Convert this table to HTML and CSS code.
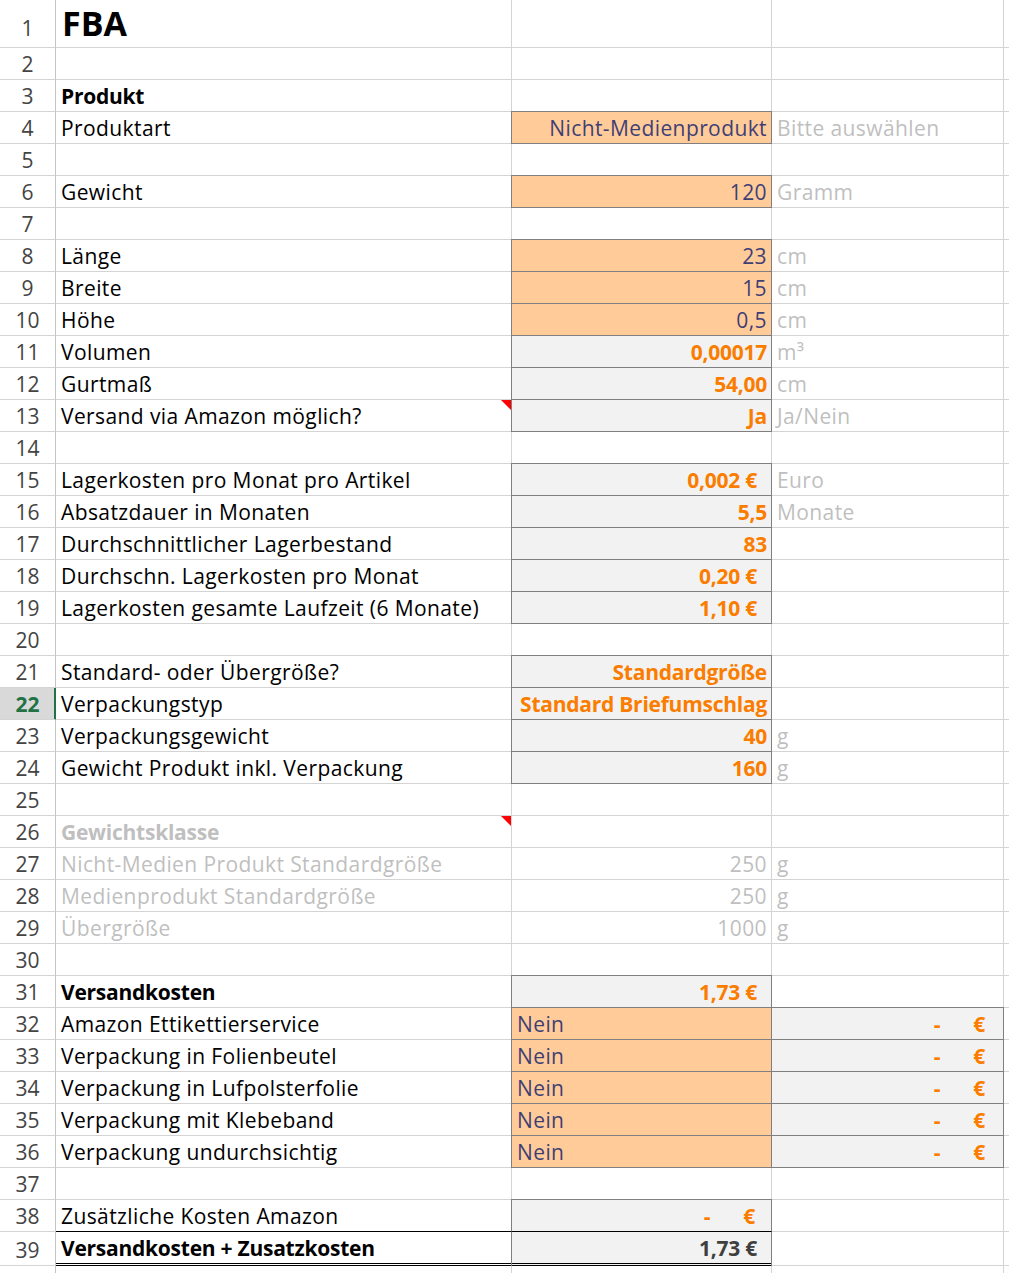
FILE: index.html
```html
<!DOCTYPE html>
<html lang="de">
<head>
<meta charset="utf-8">
<title>FBA</title>
<link rel="stylesheet" href="styles.css">
</head>
<body>
<div class="sheet">
  <div class="row r1"><div class="c h">1</div><div class="c title">FBA</div><div class="c"></div><div class="c"></div><div class="c"></div></div>
  <div class="row"><div class="c h">2</div><div class="c"></div><div class="c"></div><div class="c"></div><div class="c"></div></div>
  <div class="row"><div class="c h">3</div><div class="c b">Produkt</div><div class="c"></div><div class="c"></div><div class="c"></div></div>
  <div class="row"><div class="c h">4</div><div class="c">Produktart</div><div class="c box in r">Nicht-Medienprodukt</div><div class="c hint">Bitte auswählen</div><div class="c"></div></div>
  <div class="row"><div class="c h">5</div><div class="c"></div><div class="c"></div><div class="c"></div><div class="c"></div></div>
  <div class="row"><div class="c h">6</div><div class="c">Gewicht</div><div class="c box in r">120</div><div class="c hint">Gramm</div><div class="c"></div></div>
  <div class="row"><div class="c h">7</div><div class="c"></div><div class="c"></div><div class="c"></div><div class="c"></div></div>
  <div class="row"><div class="c h">8</div><div class="c">Länge</div><div class="c box in r">23</div><div class="c hint">cm</div><div class="c"></div></div>
  <div class="row"><div class="c h">9</div><div class="c">Breite</div><div class="c box in r">15</div><div class="c hint">cm</div><div class="c"></div></div>
  <div class="row"><div class="c h">10</div><div class="c">Höhe</div><div class="c box in r">0,5</div><div class="c hint">cm</div><div class="c"></div></div>
  <div class="row"><div class="c h">11</div><div class="c">Volumen</div><div class="c box calc r">0,00017</div><div class="c hint">m³</div><div class="c"></div></div>
  <div class="row"><div class="c h">12</div><div class="c">Gurtmaß</div><div class="c box calc r">54,00</div><div class="c hint">cm</div><div class="c"></div></div>
  <div class="row"><div class="c h">13</div><div class="c note">Versand via Amazon möglich?</div><div class="c box calc r">Ja</div><div class="c hint">Ja/Nein</div><div class="c"></div></div>
  <div class="row"><div class="c h">14</div><div class="c"></div><div class="c"></div><div class="c"></div><div class="c"></div></div>
  <div class="row"><div class="c h">15</div><div class="c">Lagerkosten pro Monat pro Artikel</div><div class="c box calc acct">0,002 €</div><div class="c hint">Euro</div><div class="c"></div></div>
  <div class="row"><div class="c h">16</div><div class="c">Absatzdauer in Monaten</div><div class="c box calc r">5,5</div><div class="c hint">Monate</div><div class="c"></div></div>
  <div class="row"><div class="c h">17</div><div class="c">Durchschnittlicher Lagerbestand</div><div class="c box calc r">83</div><div class="c"></div><div class="c"></div></div>
  <div class="row"><div class="c h">18</div><div class="c">Durchschn. Lagerkosten pro Monat</div><div class="c box calc acct">0,20 €</div><div class="c"></div><div class="c"></div></div>
  <div class="row"><div class="c h">19</div><div class="c">Lagerkosten gesamte Laufzeit (6 Monate)</div><div class="c box calc acct">1,10 €</div><div class="c"></div><div class="c"></div></div>
  <div class="row"><div class="c h">20</div><div class="c"></div><div class="c"></div><div class="c"></div><div class="c"></div></div>
  <div class="row"><div class="c h">21</div><div class="c">Standard- oder Übergröße?</div><div class="c box calc r">Standardgröße</div><div class="c"></div><div class="c"></div></div>
  <div class="row"><div class="c h sel">22</div><div class="c">Verpackungstyp</div><div class="c box calc r">Standard Briefumschlag</div><div class="c"></div><div class="c"></div></div>
  <div class="row"><div class="c h">23</div><div class="c">Verpackungsgewicht</div><div class="c box calc r">40</div><div class="c hint">g</div><div class="c"></div></div>
  <div class="row"><div class="c h">24</div><div class="c">Gewicht Produkt inkl. Verpackung</div><div class="c box calc r">160</div><div class="c hint">g</div><div class="c"></div></div>
  <div class="row"><div class="c h">25</div><div class="c"></div><div class="c"></div><div class="c"></div><div class="c"></div></div>
  <div class="row"><div class="c h">26</div><div class="c note hint b">Gewichtsklasse</div><div class="c"></div><div class="c"></div><div class="c"></div></div>
  <div class="row"><div class="c h">27</div><div class="c hint">Nicht-Medien Produkt Standardgröße</div><div class="c hint r">250</div><div class="c hint">g</div><div class="c"></div></div>
  <div class="row"><div class="c h">28</div><div class="c hint">Medienprodukt Standardgröße</div><div class="c hint r">250</div><div class="c hint">g</div><div class="c"></div></div>
  <div class="row"><div class="c h">29</div><div class="c hint">Übergröße</div><div class="c hint r">1000</div><div class="c hint">g</div><div class="c"></div></div>
  <div class="row"><div class="c h">30</div><div class="c"></div><div class="c"></div><div class="c"></div><div class="c"></div></div>
  <div class="row"><div class="c h">31</div><div class="c b">Versandkosten</div><div class="c box calc acct">1,73 €</div><div class="c"></div><div class="c"></div></div>
  <div class="row"><div class="c h">32</div><div class="c">Amazon Ettikettierservice</div><div class="c box in">Nein</div><div class="c box calc dash dc"><span>-</span><span>€</span></div><div class="c"></div></div>
  <div class="row"><div class="c h">33</div><div class="c">Verpackung in Folienbeutel</div><div class="c box in">Nein</div><div class="c box calc dash dc"><span>-</span><span>€</span></div><div class="c"></div></div>
  <div class="row"><div class="c h">34</div><div class="c">Verpackung in Lufpolsterfolie</div><div class="c box in">Nein</div><div class="c box calc dash dc"><span>-</span><span>€</span></div><div class="c"></div></div>
  <div class="row"><div class="c h">35</div><div class="c">Verpackung mit Klebeband</div><div class="c box in">Nein</div><div class="c box calc dash dc"><span>-</span><span>€</span></div><div class="c"></div></div>
  <div class="row"><div class="c h">36</div><div class="c">Verpackung undurchsichtig</div><div class="c box in">Nein</div><div class="c box calc dash dc"><span>-</span><span>€</span></div><div class="c"></div></div>
  <div class="row"><div class="c h">37</div><div class="c"></div><div class="c"></div><div class="c"></div><div class="c"></div></div>
  <div class="row"><div class="c h">38</div><div class="c above-total">Zusätzliche Kosten Amazon</div><div class="c box calc dash db"><span>-</span><span>€</span></div><div class="c"></div><div class="c"></div></div>
  <div class="row r39"><div class="c h">39</div><div class="c b total">Versandkosten + Zusatzkosten</div><div class="c box calc acct total tot-val">1,73 €</div><div class="c"></div><div class="c"></div></div>
  <div class="row"><div class="c h"></div><div class="c"></div><div class="c"></div><div class="c"></div><div class="c"></div></div>
</div>
</body>
</html>
```

FILE: styles.css
```css
html, body {
  margin: 0;
  padding: 0;
  background: #ffffff;
}

.sheet {
  width: 1009px;
  height: 1273px;
  overflow: hidden;
  font-family: "Open Sans", Lato, "Liberation Sans", sans-serif;
  font-size: 21px;
  letter-spacing: 0.4px;
  color: #000000;
}

.row {
  display: grid;
  grid-template-columns: 56px 456px 260px 232px 1fr;
  height: 32px;
}

.row.r1 {
  height: 48px;
}

.row.r39 {
  height: 34px;
}

.c {
  box-sizing: border-box;
  position: relative;
  display: flex;
  align-items: flex-end;
  padding: 0 4px 3px 5px;
  border-right: 1px solid #d4d4d4;
  border-bottom: 1px solid #d4d4d4;
  white-space: nowrap;
  line-height: 24px;
}

.r1 .c {
  padding-bottom: 7px;
}

.h {
  justify-content: center;
  padding-left: 0;
  padding-right: 0;
  color: #444444;
  letter-spacing: 0;
  border-right-color: #c4c4c4;
}

.h.sel {
  background: #d9d9d9;
  color: #217346;
  font-weight: bold;
  border-right-color: #217346;
  box-shadow: inset -1px 0 0 #217346;
}

.r1 .title {
  font-size: 34px;
  font-weight: bold;
  letter-spacing: 0;
  line-height: 36px;
  padding-bottom: 6px;
  padding-left: 6px;
}

.b {
  font-weight: bold;
  letter-spacing: -0.25px;
}

.hint {
  color: #bfbfbf;
}

.r {
  justify-content: flex-end;
}

.acct {
  justify-content: flex-end;
  padding-right: 14px;
}

.dash {
  justify-content: flex-end;
  gap: 33px;
}

.dc {
  padding-right: 18px;
}

.db {
  padding-right: 16px;
}

.in {
  background: #ffcc99;
  color: #3f3f76;
}

.calc {
  background: #f2f2f2;
  color: #fa7d00;
  font-weight: bold;
  letter-spacing: -0.25px;
}

.box::after {
  content: "";
  position: absolute;
  top: -1px;
  left: -1px;
  right: -1px;
  bottom: -1px;
  border: 1px solid #7f7f7f;
  pointer-events: none;
}

.note::before {
  content: "";
  position: absolute;
  top: 0;
  right: 0;
  width: 0;
  height: 0;
  border-top: 10px solid #ff0000;
  border-left: 10px solid transparent;
}

.above-total {
  border-bottom-color: #000000;
}

.total {
  border-bottom: 3px double #000000;
}

.tot-val {
  color: #3f3f3f;
}

.tot-val::after {
  border-top-color: #000000;
  border-bottom: none;
  bottom: -3px;
}
```
